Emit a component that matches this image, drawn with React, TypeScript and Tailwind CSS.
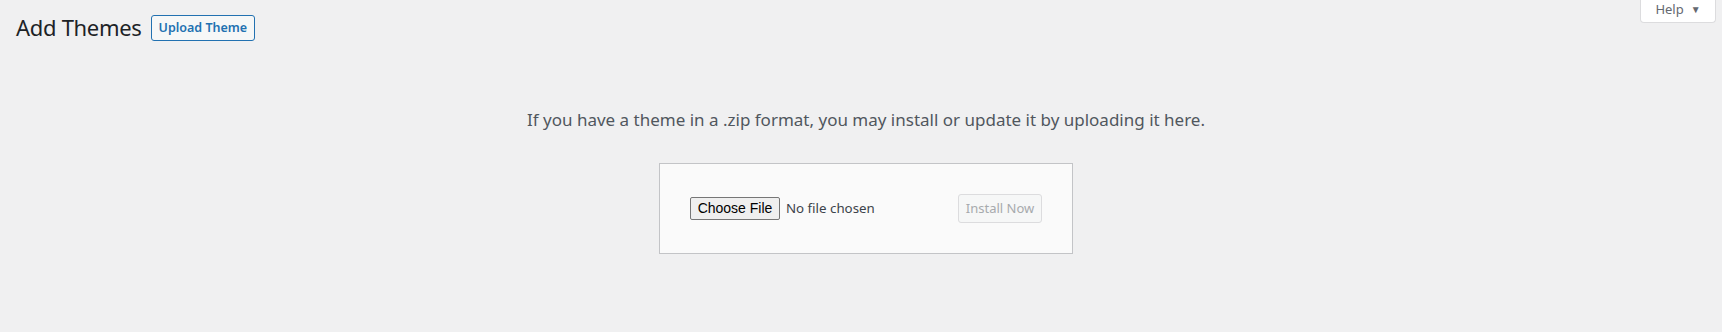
export default function App() {
  return (
    <div className="min-h-[332px] bg-[#f0f0f1] pl-[16px] pr-[6px] text-[#3c434a] [font-family:'Noto_Sans',sans-serif]">
      <div className="flex items-start justify-between">
        <div className="flex items-start gap-[9px] pt-[12px]">
          <h1 className="text-[22px] leading-[30px] font-normal tracking-[-0.3px] text-[#1d2327]">Add Themes</h1>
          <button className="mt-[3px] h-[26px] rounded-[3px] border border-[#2271b1] bg-[#f6f7f7] px-[7px] text-[12.5px] font-semibold leading-none text-[#2271b1]">
            Upload Theme
          </button>
        </div>
        <button className="flex h-[23px] w-[76px] items-center justify-center gap-[7px] rounded-b-[4px] border border-t-0 border-[#dcdcde] bg-white pb-[3px] text-[13px] text-[#646970]">
          <span>Help</span>
          <span className="text-[10px]">▼</span>
        </button>
      </div>

      <div className="flex flex-col items-center">
        <p className="mt-[66px] text-[17px] leading-[24px] text-[#50575e]">
          If you have a theme in a .zip format, you may install or update it by uploading it here.
        </p>
        <form className="mt-[31px] flex w-[414px] items-center justify-between border border-[#c3c4c7] bg-[#fafafa] p-[30px]">
          <div className="flex items-center gap-[6px]">
            <span className="flex h-[23px] w-[90px] items-center justify-center rounded-[2px] border border-[#767676] bg-[#efefef] text-[14px] text-black [font-family:'Liberation_Sans',Arial,sans-serif]">
              Choose File
            </span>
            <span className="text-[13.3px] text-[#3c434a]">No file chosen</span>
          </div>
          <button
            type="button"
            className="h-[29px] w-[84px] rounded-[3px] border border-[#dcdcde] bg-[#f6f7f7] text-[13px] text-[#a7aaad]"
          >
            Install Now
          </button>
        </form>
      </div>
    </div>
  );
}
